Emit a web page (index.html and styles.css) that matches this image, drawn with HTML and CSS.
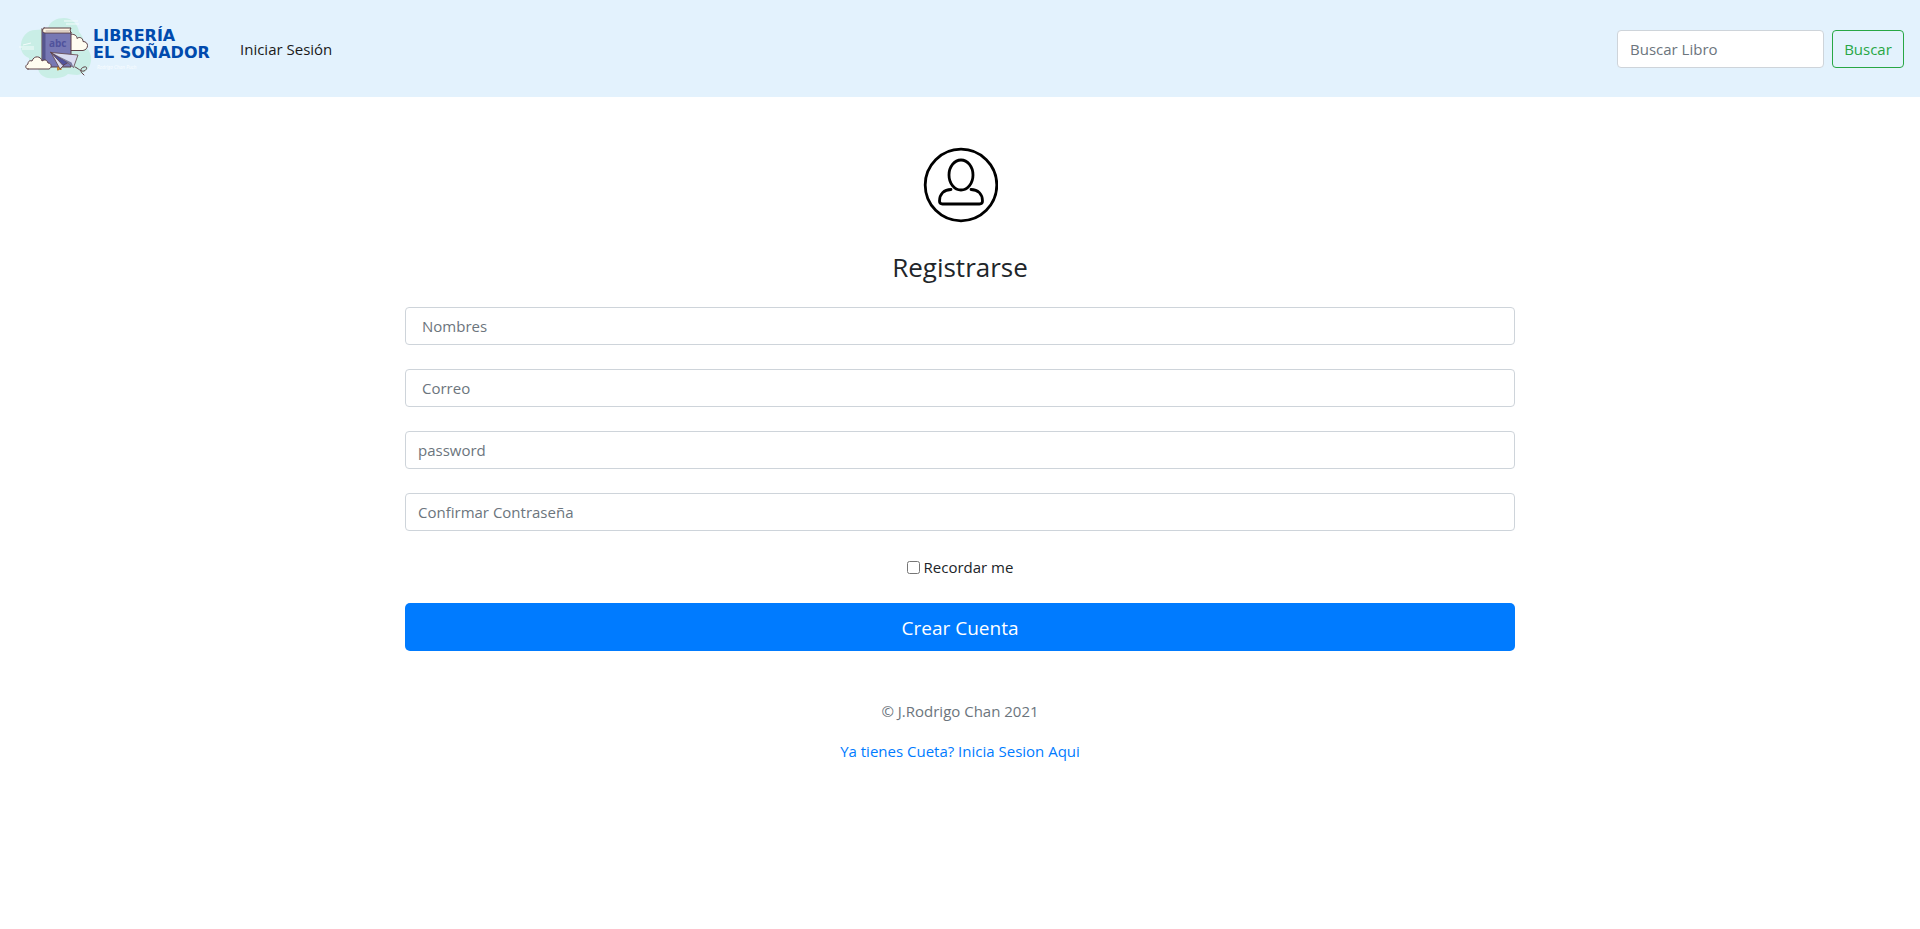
FILE: index.html
```html
<!DOCTYPE html>
<html lang="es">
<head>
<meta charset="utf-8">
<meta name="viewport" content="width=device-width, initial-scale=1">
<title>Registrarse</title>
<link rel="stylesheet" href="styles.css">
</head>
<body>
<nav class="navbar">
  <a class="brand" href="#" aria-label="Librería El Soñador">
    <svg class="logo" viewBox="16 8 200 81" role="img" aria-hidden="true">
      <path fill="#c9eee6" d="M48 28C50 21 57 18 64 18c8 0 14 6 15 14 4 4 5 9 5 14 5 3 8 9 7 15-1 8-7 13-14 14-4 0-7-1-9-1-4 4-13 5-20 4-6-1-10-6-10-10-6 0-9-5-9-10-6-2-9-8-8-14 1-8 7-14 14-14 5 0 8-1 13-2z"/>
      <path stroke="#f4fcfc" stroke-width="1" fill="none" d="M64 21h14M66 24h13M19 47h15M23 45l8-2M22 49h12"/>
      <g stroke="#5d4146" stroke-width="1" stroke-linejoin="round" stroke-linecap="round">
        <path fill="#fffdf0" d="M70 50.500h13c6-1 6-9 0-9 0-4-4-5-6-3 0-3-3-5-7-4z"/>
        <path fill="#7778b4" d="M42 29v34c0 2 1 3 3 4h26V32H45z"/>
        <path fill="#56568f" stroke="none" d="M42.500 31v32l3 3V33z"/>
        <path fill="#fff6e5" d="M44 28h27l-1 2 1 3H45c-3 0-3-4-1-5z"/>
        <path fill="none" stroke="#b8a6a1" d="M46 31h23"/>
        <path fill="#edaa2b" stroke="#b77b2c" d="M58 67h3v3l-1-1-2 1z"/>
        <path fill="#fffdf0" d="M28 69h21c3-1 3-6-1-6-1-3-3-4-6-2-1-5-8-6-10 0-3-1-4 1-4 3-3 1-3 5 0 5z"/>
        <path fill="#d9dcf1" stroke-width=".8" d="M51 52.500l9 16.500 6-6z"/>
        <path fill="#50529c" stroke-width=".8" d="M51 52.500l12 13 5-3z"/>
        <path fill="#d9dcf1" stroke-width=".8" d="M51 52.500l27 2.500-4.500 12.500-7-6z"/>
        <path fill="#77799f" stroke="none" d="M54 54l12.500 7.500 7 6-2-5z"/>
        <path fill="none" d="M75 67c3 1 6 5 9 4 3-1 4-5 0-4-4 1-4 5-1 7l1 1"/>
      </g>
      <text class="logo-abc" x="49" y="47">abc</text>
      <text class="logo-name" x="93" y="41">LIBRERÍA</text>
      <text class="logo-name" x="93" y="58">EL SOÑADOR</text>
      <text class="logo-sign" x="97" y="69">Rodrigo Chan Puch</text>
    </svg>
  </a>
  <a class="nav-link" href="#">Iniciar Sesión</a>
  <form class="search">
    <input class="control search-box" type="search" placeholder="Buscar Libro" aria-label="Buscar Libro">
    <button class="btn-search" type="submit">Buscar</button>
  </form>
</nav>
<main class="container">
  <form class="register">
    <svg class="avatar" viewBox="-1 0 76 76" fill="none" stroke="#000" stroke-width="2.8" stroke-linecap="round" aria-hidden="true">
      <circle cx="38" cy="38" r="35.800"/>
      <ellipse cx="38" cy="28" rx="12" ry="15"/>
      <path d="M28 42.500C21 42.500 16.500 47 16.500 54c0 2 1 3 3 3h37c2 0 3-1 3-3 0-7-4.500-11.500-11.500-11.500"/>
    </svg>
    <h1 class="title">Registrarse</h1>
    <input class="control field field-indent" type="text" placeholder="Nombres" aria-label="Nombres">
    <input class="control field field-indent" type="email" placeholder="Correo" aria-label="Correo">
    <input class="control field" type="password" placeholder="password" aria-label="password">
    <input class="control field" type="password" placeholder="Confirmar Contraseña" aria-label="Confirmar Contraseña">
    <label class="remember"><input class="check" type="checkbox">Recordar me</label>
    <button class="btn-create" type="submit">Crear Cuenta</button>
    <p class="copyright">© J.Rodrigo Chan 2021</p>
    <a class="login-link" href="#">Ya tienes Cueta? Inicia Sesion Aqui</a>
  </form>
</main>
</body>
</html>
```
FILE: styles.css
```css
* {
  box-sizing: border-box;
}

body {
  margin: 0;
  background: #fff;
  color: #212529;
  font-family: "Open Sans", "Noto Sans", sans-serif;
  font-size: 15px;
  line-height: 24px;
}

a {
  text-decoration: none;
}

.navbar {
  display: flex;
  align-items: center;
  padding: 8px 16px;
  background: #e3f2fd;
}

.brand {
  display: flex;
  margin-right: 24px;
}

.logo {
  display: block;
  width: 200px;
  height: 81px;
}

.logo-abc {
  fill: #50529c;
  font: 700 10px "Open Sans", sans-serif;
}

.logo-name {
  fill: #004aad;
  font: 700 16px "DejaVu Sans", sans-serif;
}

.logo-sign {
  fill: #f8fcff;
  font: italic 5px Lato, sans-serif;
}

.nav-link {
  color: #1a1a1a;
}

.search {
  display: flex;
  gap: 8px;
  margin-left: auto;
}

.control {
  height: 38px;
  padding: 6px 12px;
  border: 1px solid #ced4da;
  border-radius: 4px;
  background: #fff;
  color: #495057;
  font: inherit;
}

.control::placeholder {
  color: #6c757d;
  opacity: 1;
}

.search-box {
  width: 207px;
  appearance: none;
}

.btn-search {
  width: 72px;
  height: 38px;
  padding: 0;
  border: 1px solid #28a745;
  border-radius: 4px;
  background: transparent;
  color: #28a745;
  font: inherit;
}

.container {
  max-width: 1140px;
  margin: 0 auto;
  padding: 50px 15px;
}

.register {
  display: flex;
  flex-direction: column;
  align-items: center;
}

.avatar {
  width: 76px;
  height: 76px;
}

.title {
  margin: 27px 0 23px;
  font-size: 26px;
  font-weight: 400;
  line-height: 34px;
}

.field {
  width: 100%;
  margin-bottom: 24px;
}

.field-indent {
  padding-left: 16px;
}

.remember {
  display: flex;
  align-items: center;
  gap: 4px;
  margin-bottom: 24px;
}

.check {
  width: 13px;
  height: 13px;
  margin: 0;
}

.btn-create {
  width: 100%;
  height: 48px;
  padding: 2px 16px 0;
  border: 0;
  border-radius: 5px;
  background: #007bff;
  color: #fff;
  font: inherit;
  font-size: 19px;
}

.copyright {
  margin: 48px 0 16px;
  color: #6c757d;
}

.login-link {
  color: #007bff;
}
```
